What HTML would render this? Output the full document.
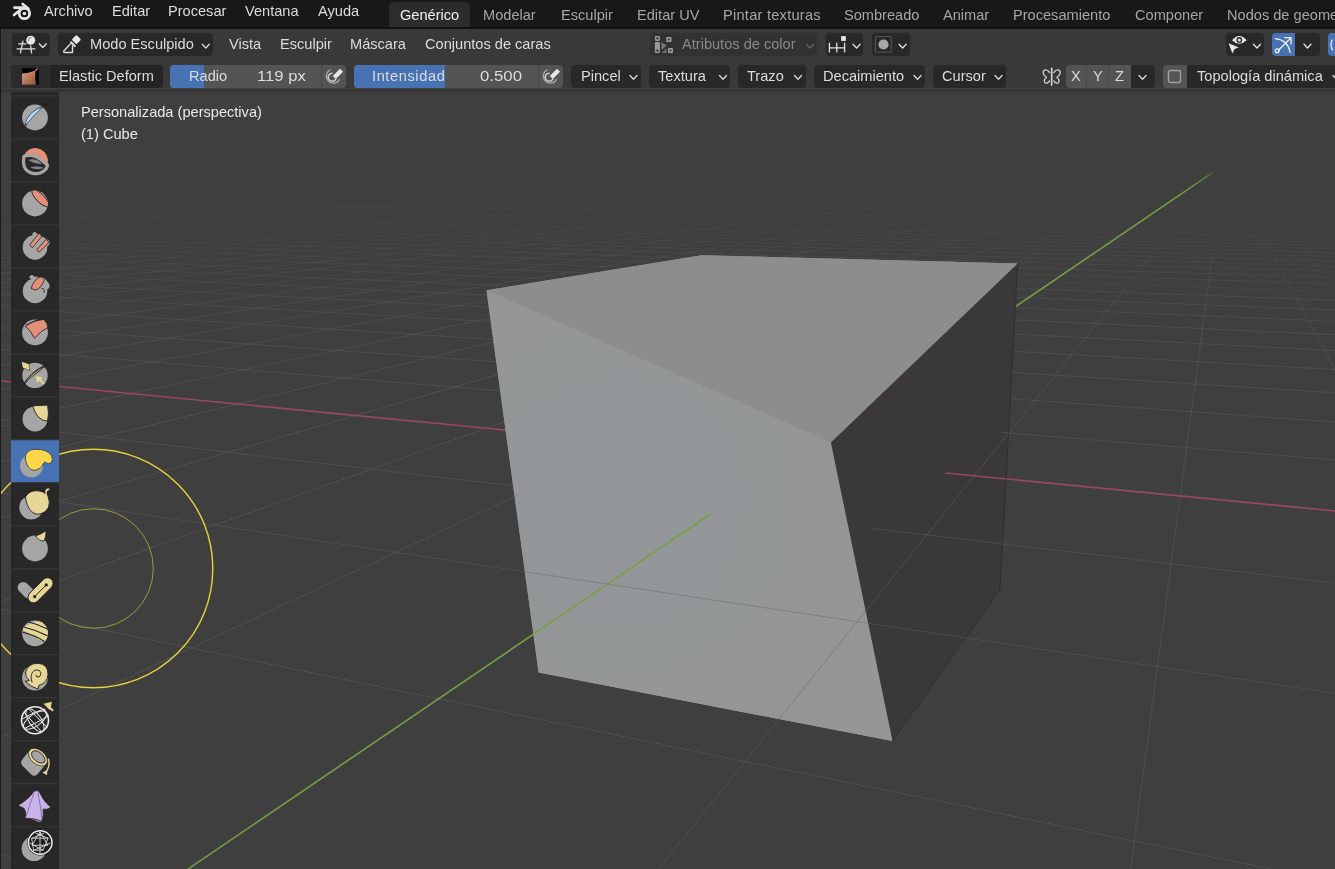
<!DOCTYPE html>
<html><head><meta charset="utf-8">
<style>
*{margin:0;padding:0;box-sizing:border-box}
html,body{width:1335px;height:869px;overflow:hidden;background:#3f3f3f;font-family:"Liberation Sans",sans-serif;font-size:14.6px;color:#e0e0e0}
.a{position:absolute}
.t{position:absolute;white-space:nowrap;line-height:14px;height:14px;will-change:transform}
#top{left:0;top:0;width:1335px;height:29px;background:#181818}
#vp{left:0;top:0;width:1335px;height:869px}
#hdr{left:1px;top:29px;width:1334px;height:63px;background:#393939;border-top-left-radius:6px}
.b{position:absolute;background:#282828;border-radius:4px}
.tab{position:absolute;top:2px;height:25px;background:#2c2c2c;border-radius:5px 5px 0 0}
.m{top:4px;color:#dcdcdc}
.w{top:8px;color:#a6a6a6}
.h1{top:37px;color:#dcdcdc}
.h2{top:69px;color:#dcdcdc}
#tb{left:11px;top:92px;width:48px;height:777px;background:#282828}
.sep{position:absolute;left:0;width:48px;height:1px;background:#3a3a3a}
svg{position:absolute;overflow:visible}
</style></head><body>
<div class="a" id="vp"><svg width="1335" height="869" style="left:0;top:0">
<g stroke-width="1"><path d="M-25.9 238.6 97.5 231.3M-23.2 241.3 168.6 229.5M-20.3 244.1 236.2 227.7M40.9 243.4 300.4 226.1M229.2 236.9 405.5 224.0M283.2 236.2 449.0 223.6M354.9 234.1 491.9 223.1M406.2 233.5 534.3 222.7M472.1 231.5 587.2 221.3M520.8 230.9 627.8 220.8M568.8 230.4 658.4 221.4M616.2 229.8 698.8 220.9M662.9 229.3 730.4 221.5M745.2 229.4 795.7 222.6M791.0 228.9 829.5 223.2M836.1 228.3 864.0 223.8M873.9 229.1 899.4 224.4M918.8 228.5 935.7 225.0M957.9 229.2 972.8 225.6M998.0 230.0 1010.8 226.3M1042.8 229.4 1049.7 226.9M1084.2 230.1 1089.7 227.6M1170.5 231.7 1172.6 229.0M1215.3 232.5 1215.7 229.8M1261.4 233.3 1259.9 230.5M1308.8 234.2 1305.3 231.3M1357.6 235.0 1352.0 232.1M-26.2 240.3 50.1 242.8M0.9 237.0 113.4 240.4M43.1 234.5 193.1 238.8M82.5 232.2 249.5 236.7M136.4 230.5 323.0 235.2M187.7 228.8 393.7 233.8M253.9 227.6 461.9 232.4M300.4 226.1 527.7 231.1M362.2 225.0 612.2 230.2M480.0 222.9 776.2 228.6M554.2 222.2 924.6 229.1M608.8 221.3 1376.3 234.9M698.8 220.9 1371.0 232.4M-26.6 197.5 168.3 192.4M-36.8 203.6 403.2 190.0M4.3 210.5 584.4 188.7M419.9 203.7 747.7 187.7M691.2 201.6 892.4 187.6M931.9 201.0 1037.9 187.8M1360.9 190.3 1353.9 189.0M-21.2 201.8 275.6 205.9M-8.2 194.4 691.2 201.6M230.9 191.5 1366.1 200.6M467.1 189.3 1365.2 195.0M760.5 187.8 1364.6 191.0" stroke="#646464" stroke-opacity="0.059" fill="none"/>
<path d="M-48.4 249.3 40.9 243.4M-44.0 256.7 229.2 236.9M59.0 253.3 283.2 236.2M155.0 250.1 354.9 234.1M244.5 247.1 406.2 233.5M306.3 246.3 472.1 231.5M387.4 243.5 520.8 230.9M445.5 242.7 568.8 230.4M519.2 240.2 616.2 229.8M574.1 239.5 662.9 229.3M681.2 238.1 745.2 229.4M722.5 239.0 791.0 228.9M775.2 238.3 836.1 228.3M827.2 237.7 873.9 229.1M870.5 238.6 918.8 228.5M922.1 237.9 957.9 229.2M967.1 238.9 998.0 230.0M1013.5 239.9 1042.8 229.4M1065.0 239.1 1084.2 230.1M1162.8 241.2 1170.5 231.7M1214.0 242.2 1215.3 232.5M1266.8 243.3 1261.4 233.3M1321.3 244.5 1308.8 234.2M1360.5 236.6 1357.6 235.0M-39.9 255.6 -17.6 256.5M-27.8 250.1 59.0 253.3M50.1 242.8 220.4 248.2M113.4 240.4 283.3 245.6M193.1 238.8 365.2 243.7M249.5 236.7 443.8 241.9M323.0 235.2 542.9 240.8M393.7 233.8 615.5 239.2M461.9 232.4 734.6 238.7M527.7 231.1 853.1 238.2M612.2 230.2 1083.0 240.1M776.2 228.6 1388.2 240.4M924.6 229.1 1382.1 237.5M-23.2 211.6 4.3 210.5M-38.6 226.0 419.9 203.7M-13.8 250.6 691.2 201.6M665.7 234.1 931.9 201.0M-30.2 244.8 36.8 247.1M-23.9 215.0 854.6 232.6M275.6 205.9 1369.2 220.9M691.2 201.6 1367.3 208.5" stroke="#646464" stroke-opacity="0.117" fill="none"/>
<path d="M-41.5 260.9 59.0 253.3M-38.7 265.6 155.0 250.1M-35.6 270.7 244.5 247.1M82.6 266.2 306.3 246.3M191.5 262.0 387.4 243.5M292.1 258.1 445.5 242.7M362.0 257.1 519.2 240.2M451.8 253.6 574.1 239.5M581.0 251.7 681.2 238.1M643.8 250.7 722.5 239.0M705.5 249.8 775.2 238.3M766.1 248.9 827.2 237.7M815.2 250.2 870.5 238.6M875.2 249.3 922.1 237.9M926.6 250.6 967.1 238.9M986.0 249.7 1013.5 239.9M1039.7 251.0 1065.0 239.1M1152.7 253.8 1162.8 241.2M1212.3 255.3 1214.0 242.2M1274.1 256.8 1266.8 243.3M1338.2 258.4 1321.3 244.5M-44.2 270.3 -18.2 271.5M-29.9 262.9 70.9 267.2M-17.6 256.5 153.2 263.2M59.0 253.3 256.1 260.5M220.4 248.2 419.6 254.6M283.3 245.6 507.9 252.3M365.2 243.7 619.9 250.9M443.8 241.9 729.0 249.6M542.9 240.8 895.5 249.8M615.5 239.2 1388.0 257.8M734.6 238.7 1380.5 253.6M853.1 238.2 1373.7 249.7M1083.0 240.1 1367.4 246.1M-69.0 254.4 -13.8 250.6M-46.5 322.8 665.7 234.1M36.8 247.1 1380.4 293.2M854.6 232.6 1372.7 243.0" stroke="#646464" stroke-opacity="0.176" fill="none"/>
<path d="M-32.2 276.4 82.6 266.2M-28.4 282.7 191.5 262.0M-24.1 289.9 292.1 258.1M153.0 279.5 362.0 257.1M272.9 274.2 451.8 253.6M460.1 268.0 581.0 251.7M535.9 266.7 643.8 250.7M610.1 265.5 705.5 249.8M682.7 264.2 766.1 248.9M753.8 263.0 815.2 250.2M811.1 264.8 875.2 249.3M881.5 263.6 926.6 250.6M941.9 265.4 986.0 249.7M1011.5 264.2 1039.7 251.0M1141.3 268.0 1152.7 253.8M1210.3 270.0 1212.3 255.3M1282.3 272.1 1274.1 256.8M1357.5 274.3 1338.2 258.4M-32.9 280.4 56.1 284.9M-18.2 271.5 153.0 279.5M70.9 267.2 272.8 275.9M153.2 263.2 354.0 271.2M256.1 260.5 460.1 268.0M419.6 254.6 721.5 264.3M507.9 252.3 917.4 264.7M619.9 250.9 1369.6 272.3M729.0 249.6 1362.0 266.6M895.5 249.8 1396.3 262.6" stroke="#646464" stroke-opacity="0.235" fill="none"/>
<path d="M-71.3 303.6 153.0 279.5M-69.3 313.6 272.9 274.2M245.6 297.1 460.1 268.0M378.8 290.1 535.9 266.7M471.8 288.2 610.1 265.5M562.3 286.4 682.7 264.2M650.5 284.7 753.8 263.0M736.5 282.9 811.1 264.8M820.4 281.3 881.5 263.6M890.3 283.8 941.9 265.4M963.7 286.5 1011.5 264.2M1125.6 287.5 1141.3 268.0M1207.6 290.4 1210.3 270.0M1293.9 293.5 1282.3 272.1M-37.1 305.7 34.8 310.3M1362.2 278.1 1357.5 274.3M-50.3 290.9 152.6 302.4M56.1 284.9 258.5 295.3M153.0 279.5 391.3 290.6M272.8 275.9 515.3 286.3M354.0 271.2 670.6 283.7M460.1 268.0 862.0 282.8M721.5 264.3 1387.8 285.7M917.4 264.7 1378.2 278.6" stroke="#646464" stroke-opacity="0.294" fill="none"/>
<path d="M-64.5 339.1 245.6 297.1M9.0 345.0 378.8 290.1M203.6 332.3 471.8 288.2M373.1 321.2 562.3 286.4M489.2 318.4 650.5 284.7M601.6 315.7 736.5 282.9M710.4 313.0 820.4 281.3M815.8 310.5 890.3 283.8M917.9 308.0 963.7 286.5M1102.6 316.2 1125.6 287.5M1203.6 320.7 1207.6 290.4M-20.3 324.7 106.4 333.8M1311.1 325.4 1293.9 293.5M34.8 310.3 283.4 326.1M152.6 302.4 445.7 319.0M258.5 295.3 594.9 312.6M391.3 290.6 833.0 311.3M515.3 286.3 1373.9 323.1M670.6 283.7 1362.6 311.1M862.0 282.8 1411.0 303.0" stroke="#646464" stroke-opacity="0.352" fill="none"/>
<path d="M-61.3 355.4 9.0 345.0M-57.5 375.2 203.6 332.3M-52.8 399.6 373.1 321.2M201.7 378.6 489.2 318.4M415.1 361.0 601.6 315.7M559.6 356.6 710.4 313.0M698.3 352.4 815.8 310.5M831.5 348.4 917.9 308.0M1065.6 362.3 1102.6 316.2M-43.8 345.8 263.8 371.3M1197.0 370.1 1203.6 320.7M106.4 333.8 470.6 360.0M1339.7 378.5 1311.1 325.4M283.4 326.1 719.6 353.8M445.7 319.0 1422.4 374.5M594.9 312.6 1403.1 354.0M833.0 311.3 1387.2 337.2" stroke="#646464" stroke-opacity="0.411" fill="none"/>
<path d="M-46.8 430.6 201.7 378.6M-39.0 471.1 415.1 361.0M-40.9 841.0 143.0 899.7M-28.4 526.5 559.6 356.6M-84.9 591.7 1645.3 945.6M-206.4 675.5 698.3 352.4M-26.9 488.9 1524.7 721.8M-244.3 851.9 831.5 348.4M-56.0 418.6 1457.8 597.7M637.2 895.6 1065.6 362.3M263.8 371.3 1385.9 464.2M1110.5 1019.1 1197.0 370.1M470.6 360.0 1364.3 424.2M1368.2 431.4 1339.7 378.5M719.6 353.8 1446.4 399.9" stroke="#646464" stroke-opacity="0.470" fill="none"/></g>
<g stroke-width="1.6"><path d="M-57.5 375.2 1415.3 518.8" stroke="#964a5c" stroke-opacity="1.000" fill="none"/></g>
<g stroke-width="1.6"><path d="M143.0 899.7 1181.3 193.9" stroke="#73a044" stroke-opacity="1.000" fill="none"/>
<path d="M1181.3 193.9 1195.2 184.4" stroke="#73a044" stroke-opacity="0.875" fill="none"/>
<path d="M1195.2 184.4 1202.2 179.6" stroke="#73a044" stroke-opacity="0.750" fill="none"/>
<path d="M1202.2 179.6 1206.5 176.7" stroke="#73a044" stroke-opacity="0.625" fill="none"/>
<path d="M1206.5 176.7 1209.4 174.7" stroke="#73a044" stroke-opacity="0.500" fill="none"/>
<path d="M1209.4 174.7 1211.5 173.3" stroke="#73a044" stroke-opacity="0.375" fill="none"/>
<path d="M1211.5 173.3 1213.1 172.2" stroke="#73a044" stroke-opacity="0.250" fill="none"/>
<path d="M1213.1 172.2 1214.3 171.4" stroke="#73a044" stroke-opacity="0.125" fill="none"/></g>
<polygon points="486.5,290.2 701.6,255.2 1017.7,263.4 1000,589.5 892.5,741.1 538.6,672.6" fill="#8e8f90"/>
<polygon points="486.5,290.2 701.6,255.2 1017.7,263.4 830.9,442.4" fill="#8c8d8e"/>
<radialGradient id="ff" gradientUnits="userSpaceOnUse" cx="620" cy="500" r="300"><stop offset="0" stop-color="#92979a"/><stop offset="1" stop-color="#959695"/></radialGradient>
<polygon points="486.5,290.2 830.9,442.4 892.5,741.1 538.6,672.6" fill="url(#ff)"/>
<polygon points="830.9,442.4 1017.7,263.4 1000,589.5 892.5,741.1" fill="#3a383a"/>
<polyline points="1017.7,263.4 1000,589.5 892.5,741.1" fill="none" stroke="#2e2d2e" stroke-width="1"/>
<clipPath id="ovc"><polygon points="514.5,495.3 869.4,529 1008.8,426.8 1000,589.5 892.5,741.1 538.6,672.6"/></clipPath>
<g clip-path="url(#ovc)"><g stroke-width="1"><path d="M-25.9 238.6 97.5 231.3M-23.2 241.3 168.6 229.5M-20.3 244.1 236.2 227.7M40.9 243.4 300.4 226.1M229.2 236.9 405.5 224.0M283.2 236.2 449.0 223.6M354.9 234.1 491.9 223.1M406.2 233.5 534.3 222.7M472.1 231.5 587.2 221.3M520.8 230.9 627.8 220.8M568.8 230.4 658.4 221.4M616.2 229.8 698.8 220.9M662.9 229.3 730.4 221.5M745.2 229.4 795.7 222.6M791.0 228.9 829.5 223.2M836.1 228.3 864.0 223.8M873.9 229.1 899.4 224.4M918.8 228.5 935.7 225.0M957.9 229.2 972.8 225.6M998.0 230.0 1010.8 226.3M1042.8 229.4 1049.7 226.9M1084.2 230.1 1089.7 227.6M1170.5 231.7 1172.6 229.0M1215.3 232.5 1215.7 229.8M1261.4 233.3 1259.9 230.5M1308.8 234.2 1305.3 231.3M1357.6 235.0 1352.0 232.1M-26.2 240.3 50.1 242.8M0.9 237.0 113.4 240.4M43.1 234.5 193.1 238.8M82.5 232.2 249.5 236.7M136.4 230.5 323.0 235.2M187.7 228.8 393.7 233.8M253.9 227.6 461.9 232.4M300.4 226.1 527.7 231.1M362.2 225.0 612.2 230.2M480.0 222.9 776.2 228.6M554.2 222.2 924.6 229.1M608.8 221.3 1376.3 234.9M698.8 220.9 1371.0 232.4M-26.6 197.5 168.3 192.4M-36.8 203.6 403.2 190.0M4.3 210.5 584.4 188.7M419.9 203.7 747.7 187.7M691.2 201.6 892.4 187.6M931.9 201.0 1037.9 187.8M1360.9 190.3 1353.9 189.0M-21.2 201.8 275.6 205.9M-8.2 194.4 691.2 201.6M230.9 191.5 1366.1 200.6M467.1 189.3 1365.2 195.0M760.5 187.8 1364.6 191.0" stroke="#646464" stroke-opacity="0.059" fill="none"/>
<path d="M-48.4 249.3 40.9 243.4M-44.0 256.7 229.2 236.9M59.0 253.3 283.2 236.2M155.0 250.1 354.9 234.1M244.5 247.1 406.2 233.5M306.3 246.3 472.1 231.5M387.4 243.5 520.8 230.9M445.5 242.7 568.8 230.4M519.2 240.2 616.2 229.8M574.1 239.5 662.9 229.3M681.2 238.1 745.2 229.4M722.5 239.0 791.0 228.9M775.2 238.3 836.1 228.3M827.2 237.7 873.9 229.1M870.5 238.6 918.8 228.5M922.1 237.9 957.9 229.2M967.1 238.9 998.0 230.0M1013.5 239.9 1042.8 229.4M1065.0 239.1 1084.2 230.1M1162.8 241.2 1170.5 231.7M1214.0 242.2 1215.3 232.5M1266.8 243.3 1261.4 233.3M1321.3 244.5 1308.8 234.2M1360.5 236.6 1357.6 235.0M-39.9 255.6 -17.6 256.5M-27.8 250.1 59.0 253.3M50.1 242.8 220.4 248.2M113.4 240.4 283.3 245.6M193.1 238.8 365.2 243.7M249.5 236.7 443.8 241.9M323.0 235.2 542.9 240.8M393.7 233.8 615.5 239.2M461.9 232.4 734.6 238.7M527.7 231.1 853.1 238.2M612.2 230.2 1083.0 240.1M776.2 228.6 1388.2 240.4M924.6 229.1 1382.1 237.5M-23.2 211.6 4.3 210.5M-38.6 226.0 419.9 203.7M-13.8 250.6 691.2 201.6M665.7 234.1 931.9 201.0M-30.2 244.8 36.8 247.1M-23.9 215.0 854.6 232.6M275.6 205.9 1369.2 220.9M691.2 201.6 1367.3 208.5" stroke="#646464" stroke-opacity="0.117" fill="none"/>
<path d="M-41.5 260.9 59.0 253.3M-38.7 265.6 155.0 250.1M-35.6 270.7 244.5 247.1M82.6 266.2 306.3 246.3M191.5 262.0 387.4 243.5M292.1 258.1 445.5 242.7M362.0 257.1 519.2 240.2M451.8 253.6 574.1 239.5M581.0 251.7 681.2 238.1M643.8 250.7 722.5 239.0M705.5 249.8 775.2 238.3M766.1 248.9 827.2 237.7M815.2 250.2 870.5 238.6M875.2 249.3 922.1 237.9M926.6 250.6 967.1 238.9M986.0 249.7 1013.5 239.9M1039.7 251.0 1065.0 239.1M1152.7 253.8 1162.8 241.2M1212.3 255.3 1214.0 242.2M1274.1 256.8 1266.8 243.3M1338.2 258.4 1321.3 244.5M-44.2 270.3 -18.2 271.5M-29.9 262.9 70.9 267.2M-17.6 256.5 153.2 263.2M59.0 253.3 256.1 260.5M220.4 248.2 419.6 254.6M283.3 245.6 507.9 252.3M365.2 243.7 619.9 250.9M443.8 241.9 729.0 249.6M542.9 240.8 895.5 249.8M615.5 239.2 1388.0 257.8M734.6 238.7 1380.5 253.6M853.1 238.2 1373.7 249.7M1083.0 240.1 1367.4 246.1M-69.0 254.4 -13.8 250.6M-46.5 322.8 665.7 234.1M36.8 247.1 1380.4 293.2M854.6 232.6 1372.7 243.0" stroke="#646464" stroke-opacity="0.176" fill="none"/>
<path d="M-32.2 276.4 82.6 266.2M-28.4 282.7 191.5 262.0M-24.1 289.9 292.1 258.1M153.0 279.5 362.0 257.1M272.9 274.2 451.8 253.6M460.1 268.0 581.0 251.7M535.9 266.7 643.8 250.7M610.1 265.5 705.5 249.8M682.7 264.2 766.1 248.9M753.8 263.0 815.2 250.2M811.1 264.8 875.2 249.3M881.5 263.6 926.6 250.6M941.9 265.4 986.0 249.7M1011.5 264.2 1039.7 251.0M1141.3 268.0 1152.7 253.8M1210.3 270.0 1212.3 255.3M1282.3 272.1 1274.1 256.8M1357.5 274.3 1338.2 258.4M-32.9 280.4 56.1 284.9M-18.2 271.5 153.0 279.5M70.9 267.2 272.8 275.9M153.2 263.2 354.0 271.2M256.1 260.5 460.1 268.0M419.6 254.6 721.5 264.3M507.9 252.3 917.4 264.7M619.9 250.9 1369.6 272.3M729.0 249.6 1362.0 266.6M895.5 249.8 1396.3 262.6" stroke="#646464" stroke-opacity="0.235" fill="none"/>
<path d="M-71.3 303.6 153.0 279.5M-69.3 313.6 272.9 274.2M245.6 297.1 460.1 268.0M378.8 290.1 535.9 266.7M471.8 288.2 610.1 265.5M562.3 286.4 682.7 264.2M650.5 284.7 753.8 263.0M736.5 282.9 811.1 264.8M820.4 281.3 881.5 263.6M890.3 283.8 941.9 265.4M963.7 286.5 1011.5 264.2M1125.6 287.5 1141.3 268.0M1207.6 290.4 1210.3 270.0M1293.9 293.5 1282.3 272.1M-37.1 305.7 34.8 310.3M1362.2 278.1 1357.5 274.3M-50.3 290.9 152.6 302.4M56.1 284.9 258.5 295.3M153.0 279.5 391.3 290.6M272.8 275.9 515.3 286.3M354.0 271.2 670.6 283.7M460.1 268.0 862.0 282.8M721.5 264.3 1387.8 285.7M917.4 264.7 1378.2 278.6" stroke="#646464" stroke-opacity="0.294" fill="none"/>
<path d="M-64.5 339.1 245.6 297.1M9.0 345.0 378.8 290.1M203.6 332.3 471.8 288.2M373.1 321.2 562.3 286.4M489.2 318.4 650.5 284.7M601.6 315.7 736.5 282.9M710.4 313.0 820.4 281.3M815.8 310.5 890.3 283.8M917.9 308.0 963.7 286.5M1102.6 316.2 1125.6 287.5M1203.6 320.7 1207.6 290.4M-20.3 324.7 106.4 333.8M1311.1 325.4 1293.9 293.5M34.8 310.3 283.4 326.1M152.6 302.4 445.7 319.0M258.5 295.3 594.9 312.6M391.3 290.6 833.0 311.3M515.3 286.3 1373.9 323.1M670.6 283.7 1362.6 311.1M862.0 282.8 1411.0 303.0" stroke="#646464" stroke-opacity="0.352" fill="none"/>
<path d="M-61.3 355.4 9.0 345.0M-57.5 375.2 203.6 332.3M-52.8 399.6 373.1 321.2M201.7 378.6 489.2 318.4M415.1 361.0 601.6 315.7M559.6 356.6 710.4 313.0M698.3 352.4 815.8 310.5M831.5 348.4 917.9 308.0M1065.6 362.3 1102.6 316.2M-43.8 345.8 263.8 371.3M1197.0 370.1 1203.6 320.7M106.4 333.8 470.6 360.0M1339.7 378.5 1311.1 325.4M283.4 326.1 719.6 353.8M445.7 319.0 1422.4 374.5M594.9 312.6 1403.1 354.0M833.0 311.3 1387.2 337.2" stroke="#646464" stroke-opacity="0.411" fill="none"/>
<path d="M-46.8 430.6 201.7 378.6M-39.0 471.1 415.1 361.0M-40.9 841.0 143.0 899.7M-28.4 526.5 559.6 356.6M-84.9 591.7 1645.3 945.6M-206.4 675.5 698.3 352.4M-26.9 488.9 1524.7 721.8M-244.3 851.9 831.5 348.4M-56.0 418.6 1457.8 597.7M637.2 895.6 1065.6 362.3M263.8 371.3 1385.9 464.2M1110.5 1019.1 1197.0 370.1M470.6 360.0 1364.3 424.2M1368.2 431.4 1339.7 378.5M719.6 353.8 1446.4 399.9" stroke="#646464" stroke-opacity="0.470" fill="none"/></g><g stroke-width="1.6"><path d="M-57.5 375.2 1415.3 518.8" stroke="#964a5c" stroke-opacity="1.000" fill="none"/></g><g stroke-width="1.6"><path d="M143.0 899.7 1181.3 193.9" stroke="#73a044" stroke-opacity="1.000" fill="none"/>
<path d="M1181.3 193.9 1195.2 184.4" stroke="#73a044" stroke-opacity="0.875" fill="none"/>
<path d="M1195.2 184.4 1202.2 179.6" stroke="#73a044" stroke-opacity="0.750" fill="none"/>
<path d="M1202.2 179.6 1206.5 176.7" stroke="#73a044" stroke-opacity="0.625" fill="none"/>
<path d="M1206.5 176.7 1209.4 174.7" stroke="#73a044" stroke-opacity="0.500" fill="none"/>
<path d="M1209.4 174.7 1211.5 173.3" stroke="#73a044" stroke-opacity="0.375" fill="none"/>
<path d="M1211.5 173.3 1213.1 172.2" stroke="#73a044" stroke-opacity="0.250" fill="none"/>
<path d="M1213.1 172.2 1214.3 171.4" stroke="#73a044" stroke-opacity="0.125" fill="none"/></g></g>
<circle cx="93.5" cy="568.5" r="119.3" fill="none" stroke="#e6d23a" stroke-width="1.4"/>
<circle cx="93.5" cy="568.5" r="59.8" fill="none" stroke="#a09640" stroke-width="1"/>
</svg></div>
<!-- top bar -->
<div class="a" id="top"></div>
<div class="a" style="left:0;top:27px;width:1335px;height:2px;background:#121212"></div>
<div class="tab" style="left:389px;width:81px"></div>
<div class="t m" style="left:44px">Archivo</div>
<div class="t m" style="left:112px">Editar</div>
<div class="t m" style="left:168px">Procesar</div>
<div class="t m" style="left:245px">Ventana</div>
<div class="t m" style="left:318px">Ayuda</div>
<div class="t w" style="left:400px;color:#f0f0f0">Genérico</div>
<div class="t w" style="left:483px">Modelar</div>
<div class="t w" style="left:561px">Esculpir</div>
<div class="t w" style="left:637px">Editar UV</div>
<div class="t w" style="left:723px;letter-spacing:0.25px">Pintar texturas</div>
<div class="t w" style="left:844px">Sombreado</div>
<div class="t w" style="left:943px">Animar</div>
<div class="t w" style="left:1013px">Procesamiento</div>
<div class="t w" style="left:1135px">Componer</div>
<div class="t w" style="left:1227px">Nodos de geometría</div>

<!-- header -->
<div class="a" id="hdr"></div>
<div class="a" style="left:1px;top:88px;width:1334px;height:1px;background:#404040"></div>
<div class="a" style="left:1px;top:89px;width:1334px;height:3px;background:#353535"></div>
<div class="b" style="left:12px;top:33px;width:38px;height:23px"></div>
<div class="b" style="left:58px;top:33px;width:155px;height:23px"></div>
<div class="t h1" style="left:90px">Modo Esculpido</div>
<div class="t h1" style="left:229px">Vista</div>
<div class="t h1" style="left:280px">Esculpir</div>
<div class="t h1" style="left:350px">Máscara</div>
<div class="t h1" style="left:425px">Conjuntos de caras</div>
<div class="b" style="left:650px;top:33px;width:167px;height:23px;background:#323232"></div>
<div class="t h1" style="left:682px;color:#8a8a8a">Atributos de color</div>
<div class="b" style="left:826px;top:33px;width:37px;height:23px"></div>
<div class="b" style="left:872px;top:33px;width:38px;height:23px"></div>
<div class="b" style="left:1226px;top:33px;width:38px;height:23px"></div>
<div class="b" style="left:1272px;top:33px;width:48px;height:23px"></div>
<div class="a" style="left:1272px;top:33px;width:23px;height:23px;background:#4772b3;border-radius:4px 0 0 4px"></div>
<div class="a" style="left:1328px;top:33px;width:20px;height:23px;background:#4772b3;border-radius:4px"></div>

<!-- row 2 -->
<div class="b" style="left:11px;top:65px;width:152px;height:23px;background:#242424"></div>
<div class="a" style="left:11px;top:65px;width:38px;height:23px;background:#2b2b2b;border-radius:4px 0 0 4px"></div>
<div class="a" style="left:49px;top:65px;width:1px;height:23px;background:#363636"></div>
<div class="t h2" style="left:59px">Elastic Deform</div>
<div class="a" style="left:170px;top:65px;width:176px;height:23px;background:#545454;border-radius:4px"></div>
<div class="a" style="left:170px;top:65px;width:34px;height:23px;background:#4772b3;border-radius:4px 0 0 4px"></div>
<div class="a" style="left:321px;top:65px;width:1px;height:23px;background:#474747"></div>
<div class="t h2" style="left:189px">Radio</div>
<div class="t h2" style="left:257px;transform:scaleX(1.14);transform-origin:0 0">119 px</div>
<div class="a" style="left:354px;top:65px;width:209px;height:23px;background:#545454;border-radius:4px"></div>
<div class="a" style="left:354px;top:65px;width:91px;height:23px;background:#4772b3;border-radius:4px 0 0 4px"></div>
<div class="a" style="left:538px;top:65px;width:1px;height:23px;background:#474747"></div>
<div class="t h2" style="left:372px;letter-spacing:0.6px">Intensidad</div>
<div class="t h2" style="left:480px;transform:scaleX(1.15);transform-origin:0 0">0.500</div>
<div class="b" style="left:571px;top:65px;width:70px;height:23px"></div>
<div class="t h2" style="left:581px">Pincel</div>
<div class="b" style="left:649px;top:65px;width:81px;height:23px"></div>
<div class="t h2" style="left:658px">Textura</div>
<div class="b" style="left:738px;top:65px;width:68px;height:23px"></div>
<div class="t h2" style="left:747px">Trazo</div>
<div class="b" style="left:814px;top:65px;width:111px;height:23px"></div>
<div class="t h2" style="left:823px">Decaimiento</div>
<div class="b" style="left:933px;top:65px;width:73px;height:23px"></div>
<div class="t h2" style="left:942px">Cursor</div>
<div class="b" style="left:1066px;top:65px;width:89px;height:23px"></div>
<div class="a" style="left:1066px;top:65px;width:65px;height:23px;background:#545454;border-radius:4px 0 0 4px"></div>
<div class="a" style="left:1086px;top:65px;width:1px;height:23px;background:#474747"></div>
<div class="a" style="left:1108px;top:65px;width:1px;height:23px;background:#474747"></div>
<div class="t h2" style="left:1071px">X</div>
<div class="t h2" style="left:1093px">Y</div>
<div class="t h2" style="left:1115px">Z</div>
<div class="b" style="left:1163px;top:65px;width:180px;height:23px"></div>
<div class="a" style="left:1163px;top:65px;width:24px;height:23px;background:#545454;border-radius:4px 0 0 4px"></div>
<div class="t h2" style="left:1197px">Topología dinámica</div>

<div class="a" style="left:0;top:29px;width:1px;height:840px;background:#1a1a1a"></div>
<!-- overlay text -->
<div class="t" style="left:81px;top:105px;color:#e8e8e8">Personalizada (perspectiva)</div>
<div class="t" style="left:81px;top:127px;color:#e8e8e8">(1) Cube</div>
<!-- header icons -->
<svg width="1335" height="100" style="left:0;top:0" fill="none" stroke-linecap="round" stroke-linejoin="round">
<!-- blender logo -->
<g stroke="#e6e6e6" stroke-width="2.6">
 <path d="M22.6 4 L28.5 8.8"/>
 <path d="M14.4 7.6 L23.5 7.6"/>
 <path d="M14 15 L19.8 10.2"/>
 <circle cx="24.4" cy="13.5" r="5.2" stroke-width="2.8"/>
</g>
<circle cx="24.4" cy="13.5" r="3.6" fill="#181818"/>
<circle cx="24.4" cy="13.5" r="1.8" fill="#e6e6e6"/>
<!-- editor type icon -->
<g stroke="#dcdcdc" stroke-width="1.3">
 <path d="M18.7 43.8H25.9 M17.1 48.9H34.9 M22.9 41.1L20.5 52.8 M30.7 46L31.6 52.8"/>
 <path d="M39.3 43.8L42.8 47.5L46.3 43.8"/>
</g>
<circle cx="30.7" cy="40.2" r="4.5" fill="#e6e6e6"/>
<path d="M28.3 40.5 A2.6 2.6 0 0 1 31 37.6" stroke="#555" stroke-width="0.9"/>
<!-- sculpt mode icon -->
<g stroke="#dcdcdc" stroke-width="1.4">
 <path d="M70.3 44 L63.8 51 Q63.2 52.5 65 52.5 L72.5 52.5 L72.5 46"/>
 <path d="M71 42.2 L74.8 46" stroke-width="2"/>
</g>
<rect x="73" y="36.3" width="6.8" height="6.8" rx="1.3" transform="rotate(45 76.4 39.7)" fill="#e6e6e6"/>
<path d="M202.3 44.3L205.8 48L209.3 44.3" stroke="#dcdcdc" stroke-width="1.3"/>
<!-- attribute icon -->
<g fill="#9a9a9a">
 <rect x="654.9" y="35.9" width="5" height="5" rx="0.8"/>
 <rect x="654.9" y="42" width="5" height="11" rx="1.2"/>
 <rect x="666.3" y="37" width="5.2" height="5" rx="0.8"/>
 <rect x="668" y="48" width="5" height="5" rx="0.8"/>
 <path d="M661.5 42.3 L666.5 45.5 L661.5 50 Z" fill="#7a7a7a"/>
 <path d="M661.5 53 L666.5 48 L666.5 53 Z" fill="#6a6a6a"/>
</g>
<g fill="#2a2a2a"><circle cx="657.4" cy="38.4" r="1.1"/><circle cx="657.4" cy="50.7" r="1.1"/><circle cx="668.9" cy="39.5" r="1"/><circle cx="670.5" cy="50.5" r="1"/></g>
<path d="M806.5 44.3L810 48L813.5 44.3" stroke="#6a6a6a" stroke-width="1.2"/>
<!-- snap icon -->
<g stroke="#e0e0e0" stroke-width="1.3">
 <path d="M829.4 43.1V51.9 M836.8 43.1V51.9 M844.6 43.1V51.9 M829.4 47.9H844.6"/>
 <path d="M853 44.3L856.6 48L860.2 44.3"/>
 <path d="M899 44.3L902.6 48L906.2 44.3"/>
</g>
<rect x="841.1" y="36.1" width="4.8" height="4.8" fill="#e6e6e6"/>
<rect x="875.8" y="36.6" width="15.5" height="15.5" stroke="#575757" stroke-width="1"/>
<circle cx="883.5" cy="44.5" r="5.1" fill="#a8a8a8"/>
<!-- eye icon -->
<path d="M1232 40.3 Q1239.3 31.8 1246.6 40.3 Q1239.3 47.2 1232 40.3 Z" fill="#e6e6e6"/>
<circle cx="1239.3" cy="39.9" r="2.9" fill="#282828"/>
<circle cx="1239.3" cy="39.9" r="1.5" fill="#e6e6e6"/>
<g stroke="#e6e6e6" stroke-width="1.3" fill="none">
 <path d="M1253.5 44.3L1257 48L1260.5 44.3"/>
 <path d="M1304 44.3L1307.5 48L1311 44.3"/>
</g>
<path d="M1228.6 43.2 L1238.8 47.6 L1234.6 49 L1232.4 53.4 Z" fill="#e6e6e6"/>
<!-- gizmo icon -->
<g stroke="#f0f0f0" stroke-width="1.3">
 <path d="M1275.3 38.6 Q1288 40 1290.2 52.5"/>
 <path d="M1278.3 50.5 L1290 38.8 M1284.7 37.7 L1291 37.7 L1291 44"/>
 <circle cx="1277.2" cy="50.7" r="1.9"/>
 <path d="M1332 40 Q1330 45 1332.5 50"/>
</g>
<!-- row 2 -->
<defs>
 <linearGradient id="skin" x1="0" y1="0" x2="1" y2="1"><stop offset="0" stop-color="#d4a090"/><stop offset="0.6" stop-color="#b07050"/><stop offset="1" stop-color="#8a5040"/></linearGradient>
</defs>
<rect x="22" y="68.2" width="16.9" height="16.6" fill="#000"/>
<path d="M22 73.5 Q29 73 35.5 70.5 Q34.5 78 36 84.8 L22 84.8 Z" fill="url(#skin)"/>
<path d="M35.5 70.5 L37.5 68.8" stroke="#999" stroke-width="1.2"/>
<!-- pen pressure icons -->
<g id="pen">
 <path d="M332.8 76 L340 68.8 L343 71.8 L335.8 79 Z" fill="#e8e8e8"/>
 <path d="M332 73.2 A4 4 0 1 0 336.2 77.5" stroke="#d0d0d0" stroke-width="1.6"/>
 <path d="M330 70 A7 7 0 1 0 339.5 79.5" stroke="#a8a8a8" stroke-width="1.3"/>
</g>
<use href="#pen" x="217"/>
<!-- chevrons row 2 -->
<g stroke="#dcdcdc" stroke-width="1.3">
 <path d="M630 75.5L633.5 79.2L637 75.5"/>
 <path d="M719.5 75.5L723 79.2L726.5 75.5"/>
 <path d="M794.5 75.5L798 79.2L801.5 75.5"/>
 <path d="M914 75.5L917.5 79.2L921 75.5"/>
 <path d="M995 75.5L998.5 79.2L1002 75.5"/>
 <path d="M1139 75.5L1142.5 79.2L1146 75.5"/>
 <path d="M1333 75.5L1336.5 79.2L1340 75.5"/>
</g>
<!-- symmetry icon -->
<g stroke="#cfcfcf" stroke-width="1.3">
 <path d="M1051.7 68.5V85" stroke-dasharray="2 1.2" stroke-width="1.8"/>
 <path d="M1049.6 72.5 Q1047 69 1044.2 70.3 Q1042 72.5 1044.5 75.5 L1046.5 77.5 Q1043.2 80 1044.8 82.5 Q1047 84.5 1049.6 80.8"/>
 <path d="M1053.8 72.5 Q1056.4 69 1059.2 70.3 Q1061.4 72.5 1058.9 75.5 L1056.9 77.5 Q1060.2 80 1058.6 82.5 Q1056.4 84.5 1053.8 80.8"/>
</g>
<rect x="1168.5" y="70.5" width="12" height="12" rx="2" stroke="#a0a0a0" stroke-width="1.4"/>
</svg>
<!-- toolbar -->
<div class="a" id="tb"></div>
<svg width="70" height="869" style="left:0;top:0" stroke-linecap="round" stroke-linejoin="round">
<rect x="11" y="439.8" width="48" height="42.5" fill="#4772b3"/>
<rect x="11" y="95.5" width="48" height="1" fill="#3a3a3a"/><rect x="11" y="138.5" width="48" height="1" fill="#3a3a3a"/><rect x="11" y="181.5" width="48" height="1" fill="#3a3a3a"/><rect x="11" y="224.4" width="48" height="1" fill="#3a3a3a"/><rect x="11" y="267.4" width="48" height="1" fill="#3a3a3a"/><rect x="11" y="310.4" width="48" height="1" fill="#3a3a3a"/><rect x="11" y="353.4" width="48" height="1" fill="#3a3a3a"/><rect x="11" y="396.4" width="48" height="1" fill="#3a3a3a"/><rect x="11" y="439.3" width="48" height="1" fill="#3a3a3a"/><rect x="11" y="482.3" width="48" height="1" fill="#3a3a3a"/><rect x="11" y="525.3" width="48" height="1" fill="#3a3a3a"/><rect x="11" y="568.3" width="48" height="1" fill="#3a3a3a"/><rect x="11" y="611.3" width="48" height="1" fill="#3a3a3a"/><rect x="11" y="654.2" width="48" height="1" fill="#3a3a3a"/><rect x="11" y="697.2" width="48" height="1" fill="#3a3a3a"/><rect x="11" y="740.2" width="48" height="1" fill="#3a3a3a"/><rect x="11" y="783.2" width="48" height="1" fill="#3a3a3a"/><rect x="11" y="826.2" width="48" height="1" fill="#3a3a3a"/>
<g transform="translate(35 117.5)"><circle r="12.9" fill="#a5a5a5"/>
<path d="M-9.2 7.6 Q-5 -5 9 -11.5 L12.5 -14.5" stroke="#1e1e1e" stroke-width="1.6" fill="none"/>
<path d="M-10 6.2 Q-6.5 -6.5 8.5 -11.2 Q-1 -2.5 -9 7.2 Z" fill="#b4d6f2" stroke="#24384c" stroke-width="0.7"/></g><g transform="translate(35 160.5)"><path d="M-11.5 -4.5 A12.7 12.7 0 0 1 12.9 -1 L12.4 4.5 Q9 1.5 6.5 -0.5 Q0 -6.5 -11.5 -4.5 Z" fill="#e48f78"/>
<path d="M-11 -4.2 Q-3 -7 5 -1.5 Q9 1.5 12.4 4.5 Q12 9 7 11.5 Q4 13.5 -1 13 Q-6 12.5 -9 9 Q-12.5 5 -11 -4.2 Z" fill="none" stroke="#a5a5a5" stroke-width="3.3" stroke-dasharray="3.2 0.9"/>
<path d="M-6.5 -0.5 Q1 -3 7 3 Q0 4 -6.5 -0.5 Z M-5 7 Q2 5 9 7.5 Q2 10 -5 7 Z" fill="#a5a5a5" opacity="0.75"/></g><g transform="translate(35 203.5)"><circle r="12.9" fill="#a5a5a5"/>
<clipPath id="c2"><circle r="12.9"/></clipPath>
<g clip-path="url(#c2)"><ellipse cx="5.5" cy="-5.2" rx="11.5" ry="4" transform="rotate(45 5.5 -5.2)" fill="#e48f78" stroke="#1e1e1e" stroke-width="0.9"/></g></g><g transform="translate(35 246.4)"><circle cx="0" cy="1" r="12.3" fill="#a5a5a5"/>
<path d="M-3 -12 Q-1 -16 2 -13 L14 -6 Q16 -2 12 0 Z" fill="#a5a5a5"/>
<path d="M-5 -2 L4 -13 Q7 -12 6.5 -9.5 L-2.5 1 Z" fill="#e48f78" stroke="#1e1e1e" stroke-width="0.8"/>
<path d="M2 3 L11 -7 Q14 -6 13.5 -3.5 L4.5 5.5 Z" fill="#e48f78" stroke="#1e1e1e" stroke-width="0.8"/></g><g transform="translate(35 289.4)"><circle cx="0" cy="1.5" r="12.3" fill="#a5a5a5"/>
<path d="M-6 -12 Q-4 -16 -1 -13 L9 -12 L14 -6 Q16 -2 12 0 Z" fill="#a5a5a5"/>
<path d="M-3.5 -1 Q-4 -4 2 -11 Q6 -14 9 -11 Q10 -8 4 -1 Q0 2 -3.5 -1 Z" fill="#e48f78" stroke="#1e1e1e" stroke-width="0.8"/>
<path d="M-12 -8 Q-10 -10 -8 -8 M7 -1 Q10 -1 9 3" stroke="#1e1e1e" stroke-width="0.9" fill="none"/></g><g transform="translate(35 332.4)"><circle r="12.9" fill="#a5a5a5"/>
<path d="M-9.5 -6 Q-2 -12 9 -13 Q12.5 -9 12.9 -5 Q6 -2 -0.5 6 Q-4 -2 -9.5 -6 Z" fill="#e48f78" stroke="#1e1e1e" stroke-width="0.8"/>
<path d="M-9 -7.5 Q0 -13 8.5 -13.2" stroke="#1e1e1e" stroke-width="0.8" fill="none"/></g><g transform="translate(35 375.4)"><circle r="12.7" fill="#a5a5a5"/>
<path d="M-10.5 8.5 Q-6 -3 11 -10.5 Q6 -5 1 -2 Q-5 2 -10.5 8.5 Z" fill="#e6d698" stroke="#1e1e1e" stroke-width="0.9"/>
<path d="M-11 7.5 Q-3 -3 11 -9.8" stroke="#1e1e1e" stroke-width="0.9" fill="none"/>
<path d="M-13.5 -14 L-6 -11.5 L-5.2 -4.8 L-12.2 -7.5 Z" fill="#e6d698" stroke="#1e1e1e" stroke-width="0.5"/>
<path d="M8.5 8 L2.5 2" stroke="#e6d698" stroke-width="1.8"/>
<path d="M0.8 0.6 L7.8 2 L2.2 7.2 Z" fill="#e6d698"/></g><g transform="translate(35 418.4)"><circle cx="0" cy="0.5" r="12.5" fill="#a5a5a5"/>
<path d="M-2.3 -12.6 L12.6 -13.3 Q14.5 -4 12.4 2.8 Q1.5 2 -2.3 -12.6 Z" fill="#e6d698" stroke="#1e1e1e" stroke-width="0.9"/></g><g transform="translate(35 461.3)"><circle cx="-3.5" cy="4.5" r="11.5" fill="#a5a5a5"/>
<path d="M-9.8 -3 Q-10 -11.5 0 -12 Q12 -12.5 16.5 -5.5 Q18.5 -1 16 1.5 Q13 3.5 10.5 1 Q9.5 0 8.5 2 Q6 8.5 -1 9 Q-8 8.5 -9.8 -3 Z" fill="#ffd64a" stroke="#2e3a55" stroke-width="0.8"/></g><g transform="translate(35 504.3)"><circle cx="-3.7" cy="3.3" r="12" fill="#a5a5a5"/>
<path d="M-9.8 -7 Q-6 -14.5 3 -13.5 Q8 -13 10 -11 Q9 -14 11.5 -16 Q14 -17.5 15 -15 Q14 -13.5 12.5 -13 Q11.5 -11 13 -8 Q15.5 -2 13.5 3 Q10 9.5 2.5 10 Q-7 9 -9.8 -7 Z" fill="#e6d698" stroke="#1e1e1e" stroke-width="0.9"/></g><g transform="translate(35 547.3)"><circle cx="0" cy="1.2" r="12.9" fill="#a5a5a5"/>
<path d="M0.5 -11.2 Q6 -13 11 -16.5 Q11.5 -11 9 -6 Q4 -6 0.5 -11.2 Z" fill="#e6d698" stroke="#1e1e1e" stroke-width="0.8"/></g><g transform="translate(35 590.3)"><rect x="-18.5" y="-5.5" width="19" height="11" rx="5.5" transform="rotate(45 -9 0)" fill="#a5a5a5"/>
<rect x="-10" y="-5.6" width="31" height="11.2" rx="5.6" transform="rotate(-45 5.5 0)" fill="#e6d698" stroke="#1e1e1e" stroke-width="0.9"/>
<path d="M-0.3 6.3 L11.2 -5.4" stroke="#1e1e1e" stroke-width="1"/>
<circle cx="-0.3" cy="6.3" r="1.6" fill="#1e1e1e"/><circle cx="11.2" cy="-5.4" r="1.6" fill="#1e1e1e"/></g><g transform="translate(35 633.3)"><circle r="12.9" fill="#a5a5a5"/>
<clipPath id="c12"><circle r="12.9"/></clipPath>
<g clip-path="url(#c12)">
<path d="M-13 -4 Q0 -16 14 -10 L14 6 Q8 10 0 4 Q-6 0 -13 -4 Z" fill="#e6d698"/>
<path d="M-7 -11.5 Q3 -9 13 -4 M-10.5 -6 Q2 -3 12.5 2.5 M-12 -1 Q0 2 9 8" stroke="#1e1e1e" stroke-width="1.1" fill="none"/>
</g></g><g transform="translate(35 676.2)"><circle cx="0" cy="1.5" r="12.9" fill="#a5a5a5"/>
<path d="M-9.5 -4 Q-7 -13 3 -13 Q13 -12 13 -2 Q12.5 7 4 9 L3 13 L-4.5 9.5 L-10 5 L-5.5 4.5 Q-10 1 -9.5 -4 Z" fill="#e6d698" stroke="#1e1e1e" stroke-width="0.9"/>
<path d="M-3 6 Q-6 -3 0 -6 Q5 -7 6 -3 Q6 1 2 1 L1 -1" stroke="#1e1e1e" stroke-width="0.9" fill="none"/></g><g transform="translate(35 719.2)"><g stroke="#e8e8e8" stroke-width="1" fill="none">
<circle cx="0" cy="1" r="13.5" stroke-width="1.6"/>
<ellipse cx="0" cy="1" rx="6" ry="13.3" transform="rotate(-35 0 1)"/>
<ellipse cx="0" cy="1" rx="13.3" ry="6" transform="rotate(-35 0 1)"/>
<path d="M-11 -7 L7 13 M-7 -11 L12 8 M-13 0 Q0 -8 10 -10 M-10 9 Q3 3 13 -3"/>
</g>
<path d="M17 -17.5 L8.5 -15.5 L15 -9 Z" fill="#e6d698"/><path d="M13 -13.5 L17.5 -9" stroke="#e6d698" stroke-width="2"/></g><g transform="translate(35 762.2)"><path d="M-6 -11 L10 3 L2 12.5 Q-1 15 -4 12 L-13 3 Q-15 0 -12.5 -3 Z" fill="#a5a5a5"/>
<ellipse cx="3" cy="-5" rx="11" ry="7" transform="rotate(40 3 -5)" fill="#e6d698" stroke="#1e1e1e" stroke-width="0.6"/>
<ellipse cx="3.3" cy="-5.2" rx="8" ry="4.6" transform="rotate(40 3.3 -5.2)" fill="#a5a5a5" stroke="#1e1e1e" stroke-width="0.8"/>
<path d="M13.5 -3 Q15.5 4 10.5 10.5" stroke="#e6d698" stroke-width="1.4" fill="none"/><path d="M7.5 10.2 L12 13 L12.3 7.8 Z" fill="#e6d698"/></g><g transform="translate(35 805.2)"><path d="M-17 0 Q-7 -5 -1 -14 Q3 -16 5 -12 Q9 -3 16 2 Q12 5 8 4 Q9 10 7 16 Q0 13 -10 13 Q-8 7 -11 3 Q-14 2 -17 0 Z" fill="#c9b2ea" stroke="#1e1e1e" stroke-width="0.7"/>
<path d="M-1 -12 Q-5 -2 -9 12 M3 -12 Q6 2 7 15" stroke="#6a5a80" stroke-width="0.7" fill="none"/>
<path d="M-5 13 L4 17 L7 16 Z" fill="#8a7aa0"/></g><g transform="translate(35 848.2)"><circle cx="-1" cy="0.5" r="12.4" fill="#a5a5a5"/>
<circle cx="5.2" cy="-5.7" r="13" fill="#1e1e1e"/>
<g stroke="#eeeeee" fill="none" stroke-width="0.8">
<circle cx="5.2" cy="-5.7" r="11.8" stroke-width="1.5"/>
<path d="M-3 -10 L13 -10 L8 2 L-1 2 Z M5 -16 L-3 -3 L13 -3 L5 -16 M-5 -5 L8 2 M15 -5 L-1 2 M1 -15 L13 -10 M9 -15 L-3 -10 M5 -16 L5 5"/>
</g></g>
</svg>
</body></html>
